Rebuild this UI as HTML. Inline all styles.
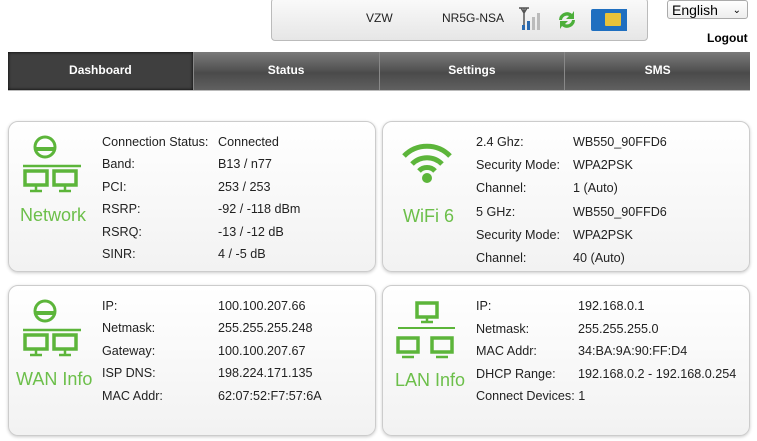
<!DOCTYPE html>
<html><head><meta charset="utf-8"><style>
body{margin:0;width:757px;height:441px;background:#fff;font-family:"Liberation Sans",Arial,sans-serif;position:relative;overflow:hidden}
.a{position:absolute;white-space:nowrap}
.top{left:271px;top:-2px;width:375px;height:41px;border:1px solid #bbb;border-radius:4px;background:linear-gradient(#fafafa,#e6e6e6);}
.sel{left:667px;top:0;width:81px;height:19px;border:1px solid #aaa;border-radius:3px;background:linear-gradient(#fff,#eee);font-size:14px;line-height:19px;padding-left:4px;box-sizing:border-box}
.nav{left:8px;top:52px;width:742px;height:38px;background:linear-gradient(#7a7a7a,#555 45%,#4a4a4a 55%,#606060);display:flex;border-bottom:1px solid #bbb}
.nav div{flex:1;color:#fff;font-weight:bold;font-size:12px;text-align:center;line-height:36px;border-right:1px solid #888}
.nav div.on{background:#3f3f3f;box-shadow:inset 0 0 3px #000}
.card{border:1px solid #ccc;border-radius:10px;background:linear-gradient(#fff,#f2f2f2);box-shadow:0 1px 3px #ccc;box-sizing:border-box}
.t{font-size:12.6px;color:#222}
.g{color:#6cbf4a;font-size:18px}
</style></head><body>
<div class="a top"></div>
<div class="a t" style="left:366px;top:11px;font-size:12px">VZW</div>
<div class="a t" style="left:442px;top:11px;font-size:12px">NR5G-NSA</div>
<svg class="a" style="left:516px;top:7px" width="30" height="26"><path d="M3 1h10M5 1l3 5 3-5M8 1v20" stroke="#555" stroke-width="1.5" fill="none"/><rect x="6" y="18" width="3" height="5" fill="#2a6ab0"/><rect x="11" y="14" width="3" height="9" fill="#2a6ab0"/><rect x="16" y="10" width="3" height="13" fill="#bbb"/><rect x="21" y="6" width="3" height="17" fill="#bbb"/></svg>
<svg class="a" style="left:555px;top:8px" width="24" height="24"><path d="M4 12a8 8 0 0 1 13-6l2-3v8h-8l3-3a5 5 0 0 0-7 4z" fill="#4caf3a"/><path d="M20 12a8 8 0 0 1-13 6l-2 3v-8h8l-3 3a5 5 0 0 0 7-4z" fill="#4caf3a"/></svg>
<svg class="a" style="left:591px;top:9px" width="36" height="22"><path d="M0 2q0-2 2-2h34v22H2q-2 0-2-2z" fill="#1f6fc0"/><rect x="14" y="4" width="16" height="13" rx="1" fill="#e8c23a"/></svg>
<div class="a sel">English<span style="position:absolute;right:6px;top:0;font-size:10px">&#8964;</span></div>
<div class="a" style="left:707px;top:31px;font-size:12px;font-weight:bold">Logout</div>
<div class="a nav"><div class="on">Dashboard</div><div>Status</div><div>Settings</div><div style="border:0">SMS</div></div>

<div class="a card" style="left:8px;top:121px;width:368px;height:151px"></div>
<div class="a card" style="left:382px;top:121px;width:368px;height:151px"></div>
<div class="a card" style="left:8px;top:285px;width:368px;height:151px"></div>
<div class="a card" style="left:382px;top:285px;width:368px;height:151px"></div>

<svg class="a" style="left:20px;top:134px" width="62" height="62"><circle cx="25" cy="13" r="10" stroke="#5cb53a" stroke-width="3" fill="none"/><path d="M15 15h20" stroke="#5cb53a" stroke-width="4"/><path d="M3 32h58" stroke="#5cb53a" stroke-width="2.5"/><rect x="5" y="37" width="22" height="14" stroke="#5cb53a" stroke-width="3.5" fill="none"/><rect x="34" y="37" width="22" height="14" stroke="#5cb53a" stroke-width="3.5" fill="none"/><path d="M10 57h12M39 57h12M16 51v5M45 51v5" stroke="#5cb53a" stroke-width="2.5"/></svg>
<div class="a g" style="left:20px;top:205px">Network</div>
<svg class="a" style="left:401px;top:140px" width="52" height="46"><path d="M3 16a32 32 0 0 1 46 0M11 24a21 21 0 0 1 30 0M18 31a11 11 0 0 1 16 0" stroke="#5cb53a" stroke-width="5" fill="none"/><circle cx="26" cy="38" r="5" fill="#5cb53a"/></svg>
<div class="a g" style="left:403px;top:206px">WiFi 6</div>
<svg class="a" style="left:20px;top:298px" width="62" height="62"><circle cx="25" cy="13" r="10" stroke="#5cb53a" stroke-width="3" fill="none"/><path d="M15 15h20" stroke="#5cb53a" stroke-width="4"/><path d="M3 32h58" stroke="#5cb53a" stroke-width="2.5"/><rect x="5" y="37" width="22" height="14" stroke="#5cb53a" stroke-width="3.5" fill="none"/><rect x="34" y="37" width="22" height="14" stroke="#5cb53a" stroke-width="3.5" fill="none"/><path d="M10 57h12M39 57h12M16 51v5M45 51v5" stroke="#5cb53a" stroke-width="2.5"/></svg>
<div class="a g" style="left:16px;top:369px">WAN Info</div>
<svg class="a" style="left:395px;top:300px" width="64" height="60"><rect x="22" y="3" width="20" height="14" stroke="#5cb53a" stroke-width="3.5" fill="none"/><path d="M26 22h12M32 17v4" stroke="#5cb53a" stroke-width="2.5"/><path d="M3 28h57" stroke="#5cb53a" stroke-width="2"/><rect x="3" y="38" width="20" height="14" stroke="#5cb53a" stroke-width="3.5" fill="none"/><rect x="37" y="38" width="20" height="14" stroke="#5cb53a" stroke-width="3.5" fill="none"/><path d="M7 57h12M41 57h12" stroke="#5cb53a" stroke-width="2.5"/></svg>
<div class="a g" style="left:395px;top:370px">LAN Info</div>

<div class="a t" style="left:102px;top:131px;line-height:22.4px">Connection Status:<br>Band:<br>PCI:<br>RSRP:<br>RSRQ:<br>SINR:</div>
<div class="a t" style="left:218px;top:131px;line-height:22.4px">Connected<br>B13 / n77<br>253 / 253<br>-92 / -118 dBm<br>-13 / -12 dB<br>4 / -5 dB</div>
<div class="a t" style="left:476px;top:131px;line-height:23.2px">2.4 Ghz:<br>Security Mode:<br>Channel:<br>5 GHz:<br>Security Mode:<br>Channel:</div>
<div class="a t" style="left:573px;top:131px;line-height:23.2px">WB550_90FFD6<br>WPA2PSK<br>1 (Auto)<br>WB550_90FFD6<br>WPA2PSK<br>40 (Auto)</div>
<div class="a t" style="left:102px;top:295px;line-height:22.4px">IP:<br>Netmask:<br>Gateway:<br>ISP DNS:<br>MAC Addr:</div>
<div class="a t" style="left:218px;top:295px;line-height:22.4px">100.100.207.66<br>255.255.255.248<br>100.100.207.67<br>198.224.171.135<br>62:07:52:F7:57:6A</div>
<div class="a t" style="left:476px;top:295px;line-height:22.6px">IP:<br>Netmask:<br>MAC Addr:<br>DHCP Range:<br>Connect Devices: 1</div>
<div class="a t" style="left:578px;top:295px;line-height:22.6px">192.168.0.1<br>255.255.255.0<br>34:BA:9A:90:FF:D4<br>192.168.0.2 - 192.168.0.254</div>
</body></html>
